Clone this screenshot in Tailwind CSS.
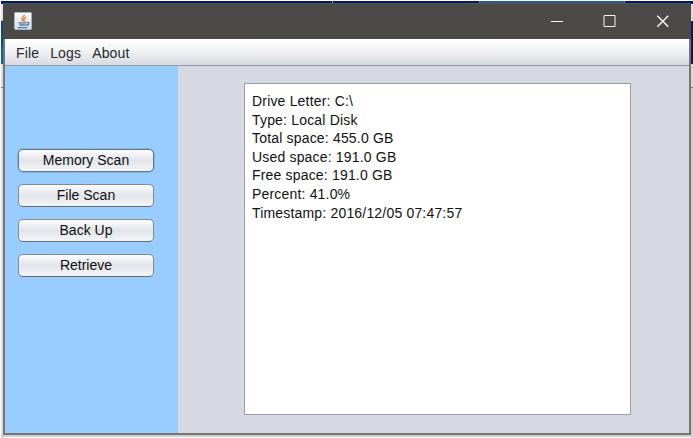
<!DOCTYPE html>
<html lang="en">
<head>
<meta charset="utf-8">
<title>Drive Scan</title>
<script src="https://cdn.jsdelivr.net/npm/@tailwindcss/browser@4"></script>
</head>
<body class="w-[693px] h-[438px] overflow-hidden bg-white font-['Liberation_Sans',Arial,sans-serif] text-[14px] text-[#111]">
<div class="relative w-[693px] h-[438px] overflow-hidden pt-[3px] pl-[3px]">
  <!-- Desktop showing around the window -->
  <div class="absolute inset-0 pt-px pl-px">
    <div class="flex h-[3px] bg-[#001868]">
      <div class="w-[332px] border-r border-[#8290b8]"></div>
      <div class="w-[146px]"></div>
      <div class="w-[146px] bg-[#205c9c] border-x border-[#5a7cab]"></div>
    </div>
    <div class="flex justify-between h-[434px]">
      <div class="w-[3px] flex flex-col">
        <div class="h-[17px] bg-[#e3e3e3] border-b border-[#aaa]"></div>
        <div class="h-[26px] bg-[#0e4594]"></div>
        <div class="h-[17px] bg-[#0860b8]"></div>
        <div class="h-[24px] bg-[#dedede] border-b border-[#777]"></div>
        <div class="flex-1 bg-[#dcdcdc]"></div>
      </div>
      <div class="w-[2px] flex flex-col">
        <div class="h-[17px] bg-[#dedede]"></div>
        <div class="h-[43px] bg-[#08185c]"></div>
        <div class="h-[24px] bg-[#d8d8d8] border-b border-[#777]"></div>
        <div class="flex-1 bg-[#cfcfcf]"></div>
      </div>
    </div>
    <div class="absolute left-px right-px top-[435px] h-[2px] bg-[#d0d0d0]"></div>
  </div>

  <main class="relative w-[688px] h-[432px] flex flex-col border-x-2 border-b-2 border-[#777573]">
    <header class="-mx-[2px] h-[36px] flex-none flex items-center bg-[#4c4a47] border-t border-[#5a5549] pl-[11px] pr-[1px]">
      <svg class="w-[18px] h-[18px] -mt-[2px]" viewBox="0 0 18 18" fill="none">
        <defs><linearGradient id="tile" x2="0" y2="1"><stop stop-color="#fafcfd"/><stop offset="1" stop-color="#d3dde7"/></linearGradient></defs>
        <rect x=".5" y=".5" width="17" height="17" rx="1" fill="url(#tile)" stroke="#9fb4c5"/>
        <path d="M10 2.8C11 4.6 7 5.5 8 7.4c.3.7 1 1.2 1.1 1.8M12.2 5.2C10 6.3 9.3 7.2 10.1 8c.5.6.4 1-.2 1.6" stroke="#e98332" stroke-width="1.5"/>
        <path d="M4.3 10.8h8.2M5.3 13h6.2M3.8 15.6h9.4M12.6 10.4c3.2-.6 3.2 2.4-.8 3" stroke="#56799a" stroke-width="1.3"/>
      </svg>
      <div class="flex-1"></div>
      <svg class="w-[140px] h-[36px] -mt-px" viewBox="0 0 140 36" fill="none" stroke="#f5f5f5">
        <path d="M1 18.5h12"/>
        <path d="M54 12.5h11v11H54z"/>
        <path d="M107.3 12.7l11 11M118.3 12.7l-11 11" stroke-width="1.5"/>
      </svg>
    </header>
    <nav class="h-[27px] flex-none flex items-center gap-[11px] pl-[11px] pt-[3px] border-b border-[#9297a1] bg-linear-to-b from-white via-[#f0f1f4] to-[#d6d9df] text-[14px] tracking-[0.15px] text-[#292929]">
      <span>File</span><span>Logs</span><span>About</span>
    </nav>
    <div class="flex flex-1 min-h-0">
      <aside class="w-[173px] flex flex-col gap-[12px] pl-[13px] pt-[83px] bg-[#99ccff]">
        <button class="w-[136px] h-[23px] rounded-[5px] border border-[#5d7892] bg-linear-to-b from-[#fdfdfe] via-[#e1e4e9] to-[#f3f5f8] shadow-[0_0_0_1px_#86b4dd] leading-[21px]">Memory Scan</button>
        <button class="w-[136px] h-[23px] rounded-[5px] border border-[#858b94] border-b-[#606b76] bg-linear-to-b from-[#fdfdfe] via-[#e1e4e9] to-[#f3f5f8] leading-[21px]">File Scan</button>
        <button class="w-[136px] h-[23px] rounded-[5px] border border-[#858b94] border-b-[#606b76] bg-linear-to-b from-[#fdfdfe] via-[#e1e4e9] to-[#f3f5f8] leading-[21px]">Back Up</button>
        <button class="w-[136px] h-[23px] rounded-[5px] border border-[#858b94] border-b-[#606b76] bg-linear-to-b from-[#fdfdfe] via-[#e1e4e9] to-[#f3f5f8] leading-[21px]">Retrieve</button>
      </aside>
      <section class="flex-1 bg-[#d6d9e1] pl-[66px] pt-[17px]">
        <div class="w-[387px] h-[332px] bg-white border border-[#9a9ea8] pl-[7px] pt-[8px] text-[14px] tracking-[0.18px] leading-[18.6px] whitespace-nowrap">
          <p>Drive Letter: C:\</p>
          <p>Type: Local Disk</p>
          <p>Total space: 455.0 GB</p>
          <p>Used space: 191.0 GB</p>
          <p>Free space: 191.0 GB</p>
          <p>Percent: 41.0%</p>
          <p>Timestamp: 2016/12/05 07:47:57</p>
        </div>
      </section>
    </div>
  </main>
</div>
</body>
</html>
